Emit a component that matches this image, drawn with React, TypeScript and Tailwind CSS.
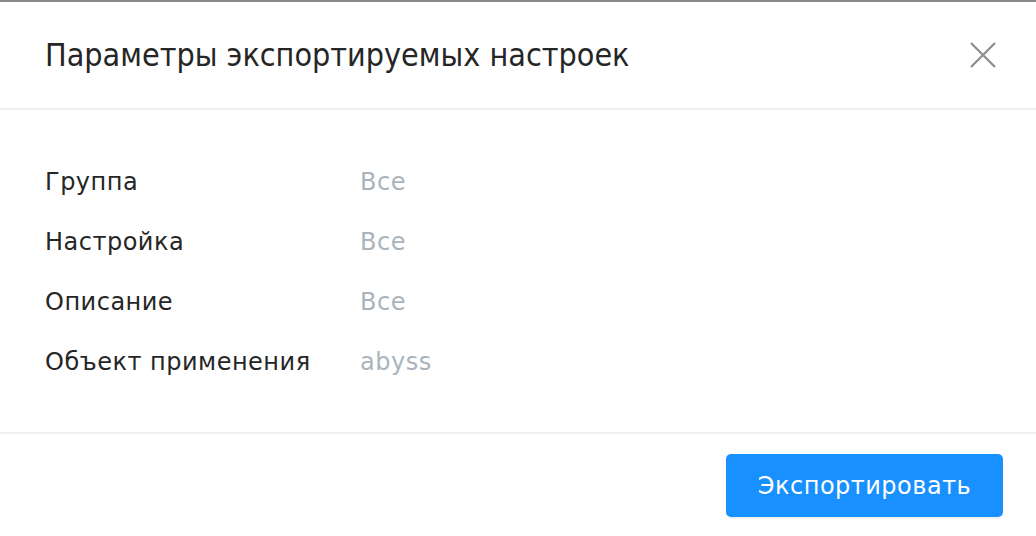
import React from 'react'

const rows = [
    { label: 'Группа', value: 'Все' },
    { label: 'Настройка', value: 'Все' },
    { label: 'Описание', value: 'Все' },
    { label: 'Объект применения', value: 'abyss' },
]

const App: React.FC = () => {
    return (
        <div className="w-[1036px] h-[536px] bg-white border-t-2 border-[#8a8a8a] flex flex-col" style={{ fontFamily: '"DejaVu Sans", "Noto Sans", sans-serif' }}>
            {/* шапка */}
            <div className="h-[108px] flex items-center justify-between pl-[45px] pr-[38px] border-b-2 border-[#f0f0f0]">
                <h1 className="text-[32px] text-[#262626] pb-[1px]" style={{ fontFamily: '"DejaVu Sans Condensed", "DejaVu Sans", sans-serif' }}>Параметры экспортируемых настроек</h1>
                <button className="w-[30px] h-[30px] flex items-center justify-center text-[#8c8c8c]">
                    <svg width="28" height="28" viewBox="0 0 28 28" fill="none" stroke="currentColor" strokeWidth="2.2">
                        <path d="M2 2 L26 26 M26 2 L2 26" />
                    </svg>
                </button>
            </div>

            {/* поля */}
            <div className="flex-1 pt-[42px] px-[45px] flex flex-col">
                {rows.map((row) => (
                    <div key={row.label} className="flex h-[60px] items-center text-[24px] tracking-[0.5px]">
                        <div className="w-[315px] text-[#262626]">{row.label}</div>
                        <div className="text-[#a9b4bd]">{row.value}</div>
                    </div>
                ))}
            </div>

            {/* подвал */}
            <div className="h-[104px] border-t-2 border-[#f0f0f0] flex items-start justify-end pr-[33px] pt-[20px]">
                <button className="w-[277px] h-[63px] rounded-[5px] bg-[#1890ff] text-white text-[24px] tracking-[0.5px] shadow-[0_2px_0_rgba(0,0,0,0.05)]">
                    Экспортировать
                </button>
            </div>
        </div>
    )
}

export default App
